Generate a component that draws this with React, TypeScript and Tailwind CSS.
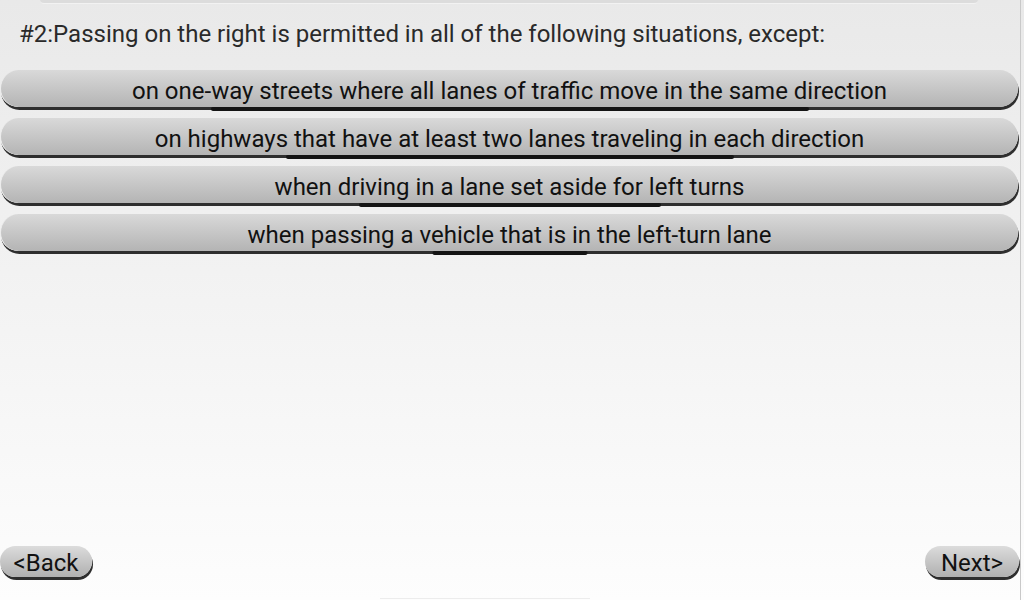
import React from "react";

const options = [
  { text: "on one-way streets where all lanes of traffic move in the same direction", dark: 598 },
  { text: "on highways that have at least two lanes traveling in each direction", dark: 448 },
  { text: "when driving in a lane set aside for left turns", dark: 302 },
  { text: "when passing a vehicle that is in the left-turn lane", dark: 155 },
];

function OptionButton({ text, dark }: { text: string; dark: number }) {
  return (
    <button className="relative w-[1018px] h-[37px] rounded-[20px] bg-gradient-to-b from-[#d9d9d9] to-[#b4b4b4] shadow-[1px_3px_0_#2e2e2e] border-l border-[#ececec] flex items-center justify-center text-[24px] leading-[28px] text-[#111] pt-[4px]">
      {text}
      <span
        className="absolute -bottom-[4px] left-1/2 -translate-x-1/2 h-[4px] bg-[#141414] rounded-full"
        style={{ width: dark }}
      />
    </button>
  );
}

function NavButton({ label, className }: { label: string; className: string }) {
  return (
    <button
      className={`h-[31px] rounded-[16px] bg-gradient-to-b from-[#dcdcdc] to-[#b0b0b0] shadow-[1px_3px_0_#2e2e2e] flex items-center justify-center text-[24px] leading-[28px] text-[#111] pt-[3px] ${className}`}
    >
      {label}
    </button>
  );
}

export default function App() {
  return (
    <div
      className="w-[1024px] h-[600px] overflow-hidden bg-gradient-to-b from-[#e9e9e9] to-[#fdfdfd] flex"
      style={{ fontFamily: "Roboto, 'Noto Sans', sans-serif" }}
    >
      <div className="w-[1021px] h-full border-r border-[#c9c9c9] flex flex-col">
        {/* tail of the element above */}
        <div className="ml-[40px] w-[938px] h-[4px] rounded-b-[6px] bg-[#dcdcdc] border-b border-[#f2f2f2]" />

        <p className="mt-[16px] ml-[19px] text-[24px] leading-[28px] text-[#2a2a2a]">
          #2:Passing on the right is permitted in all of the following situations, except:
        </p>

        <div className="mt-[22px] flex flex-col gap-[11px]">
          {options.map((o) => (
            <OptionButton key={o.text} text={o.text} dark={o.dark} />
          ))}
        </div>

        <div className="flex-1" />

        <div className="flex justify-between items-start">
          <NavButton label="<Back" className="w-[92px]" />
          <NavButton label="Next>" className="w-[94px] mr-[1px]" />
        </div>

        <div className="mt-[21px] mb-[1px] ml-[380px] w-[210px] h-[1px] bg-[#ececec]" />
      </div>
    </div>
  );
}
